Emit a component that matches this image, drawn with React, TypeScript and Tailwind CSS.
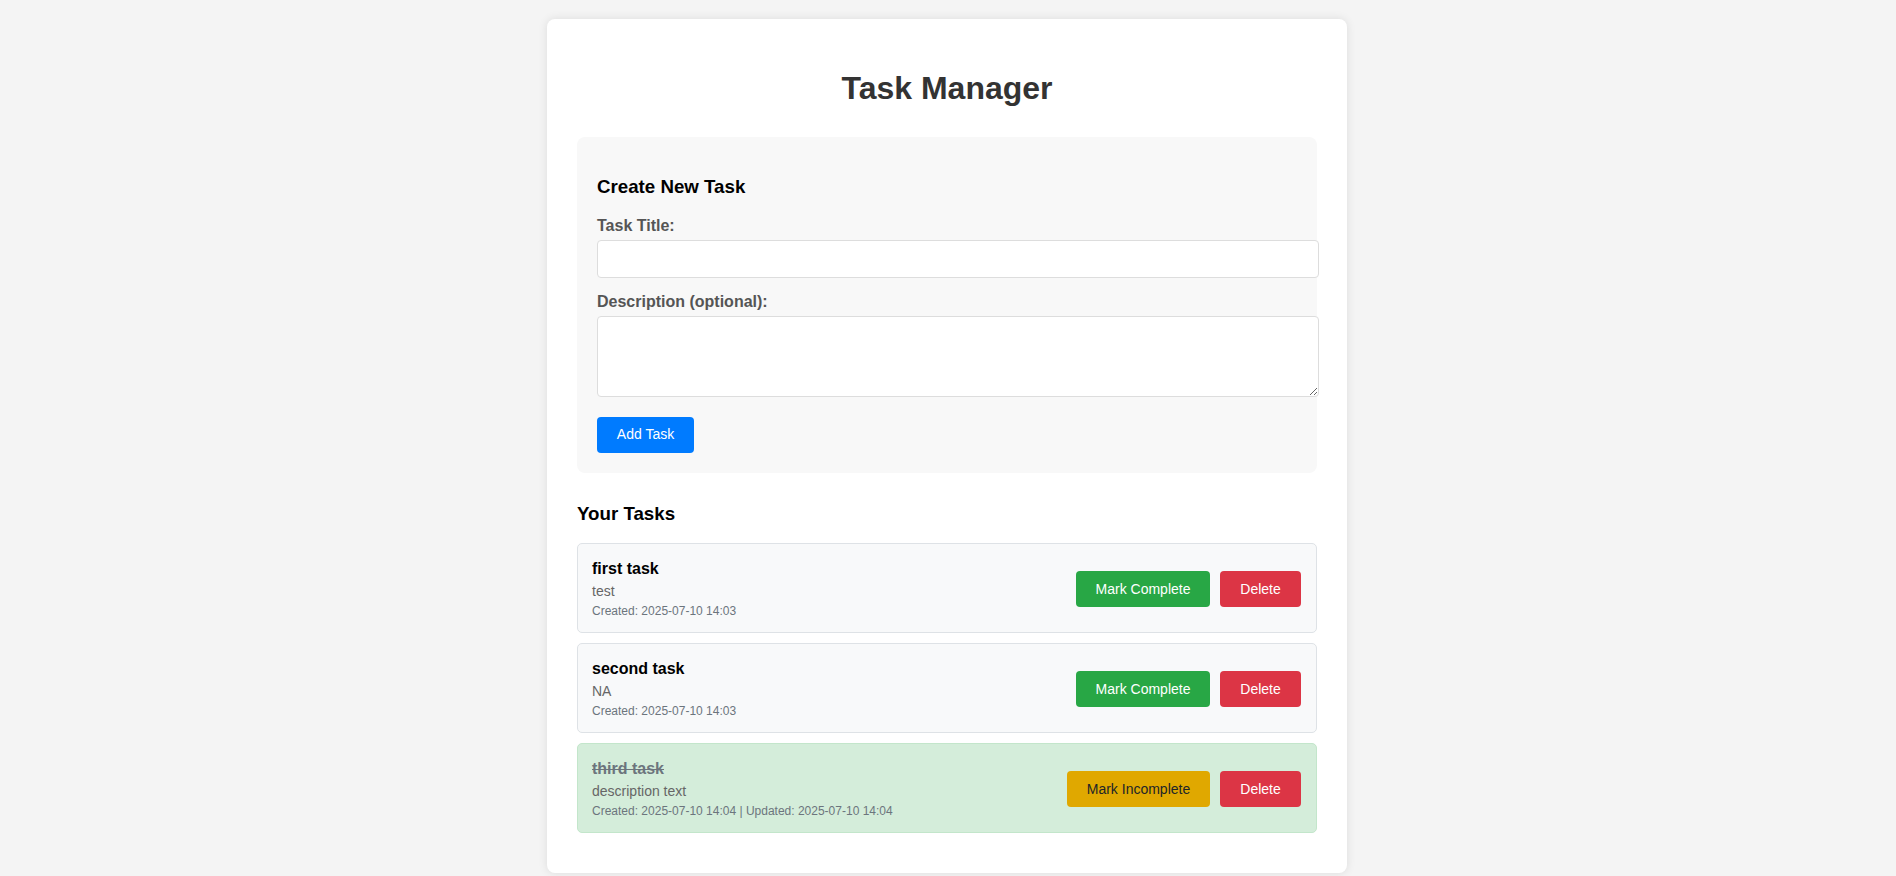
import React from "react";

type Task = {
  title: string;
  desc: string;
  meta: string;
  done: boolean;
};

const tasks: Task[] = [
  { title: "first task", desc: "test", meta: "Created: 2025-07-10 14:03", done: false },
  { title: "second task", desc: "NA", meta: "Created: 2025-07-10 14:03", done: false },
  {
    title: "third task",
    desc: "description text",
    meta: "Created: 2025-07-10 14:04 | Updated: 2025-07-10 14:04",
    done: true,
  },
];

export default function App() {
  return (
    <div
      className="min-h-[876px] bg-[#f4f4f4] pt-[19px] text-[16px] leading-[1.15]"
      style={{ fontFamily: '"Liberation Sans", Arial, sans-serif' }}
    >
      <div className="mx-auto w-[800px] -translate-x-[1px] rounded-[8px] bg-white px-[30px] pt-[30px] pb-[40px] shadow-[0_0_10px_rgba(0,0,0,0.1)]">
        <h1 className="mt-[21px] mb-[30px] text-center text-[32px] font-bold leading-[37px] text-[#333]">
          Task Manager
        </h1>

        <div className="mb-[30px] rounded-[8px] bg-[#f8f8f8] p-[20px]">
          <h3 className="mt-[19px] mb-[19px] text-[18.72px] font-bold leading-[21.5px] text-black">
            Create New Task
          </h3>
          <div className="mb-[15px]">
            <label className="mb-[5px] block font-bold leading-[18px] text-[#555]">Task Title:</label>
            <input
              type="text"
              className="block h-[38px] w-[722px] rounded-[4px] border border-[#ddd] bg-white px-[10px] text-[14px] outline-none"
            />
          </div>
          <div className="mb-[20px]">
            <label className="mb-[5px] block font-bold leading-[18px] text-[#555]">Description (optional):</label>
            <textarea className="block h-[81px] w-[722px] resize rounded-[4px] border border-[#ddd] bg-white px-[10px] py-[10px] text-[14px] outline-none" />
          </div>
          <button className="h-[36px] w-[97px] rounded-[4px] bg-[#007bff] text-[14px] text-white">
            Add Task
          </button>
        </div>

        <h3 className="mb-[19px] text-[18.72px] font-bold leading-[21.5px] text-black">Your Tasks</h3>

        <div className="flex flex-col gap-[10px]">
          {tasks.map((t) => (
            <div
              key={t.title}
              className={
                "flex h-[90px] items-center justify-between rounded-[5px] border pl-[14px] pr-[15px] " +
                (t.done ? "border-[#c3e6cb] bg-[#d4edda]" : "border-[#dee2e6] bg-[#f8f9fa]")
              }
            >
              <div className="flex flex-col pt-[1px]">
                <div
                  className={
                    "mb-[5px] text-[16px] font-bold leading-[18px] " +
                    (t.done ? "text-[#6c757d] line-through" : "text-black")
                  }
                >
                  {t.title}
                </div>
                <div className="mb-[5px] text-[14px] leading-[16px] text-[#666]">{t.desc}</div>
                <div className="text-[12px] leading-[14px] text-[#6c757d]">{t.meta}</div>
              </div>
              <div className="flex gap-[10px] pt-[2px]">
                {t.done ? (
                  <button className="h-[36px] w-[143px] rounded-[4px] bg-[#e0a800] text-[14px] text-[#212529]">
                    Mark Incomplete
                  </button>
                ) : (
                  <button className="h-[36px] w-[134px] rounded-[4px] bg-[#28a745] text-[14px] text-white">
                    Mark Complete
                  </button>
                )}
                <button className="h-[36px] w-[81px] rounded-[4px] bg-[#dc3545] text-[14px] text-white">
                  Delete
                </button>
              </div>
            </div>
          ))}
        </div>
      </div>
    </div>
  );
}
